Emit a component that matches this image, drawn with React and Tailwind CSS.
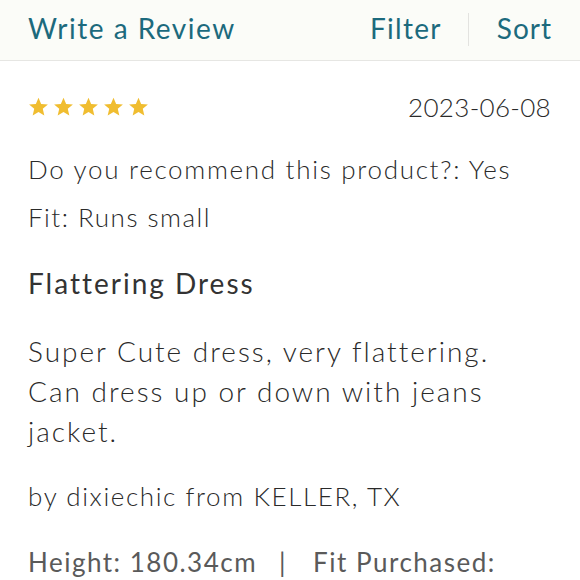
import React from "react";

const Star = () => (
  <svg width="21" height="20" viewBox="0 0 24 23" className="block">
    <path d="M12 0.8l3.05 7.2 7.75.6-5.9 5.05 1.8 7.6L12 17.2l-6.7 4.05 1.8-7.6L1.2 8.6l7.75-.6z" fill="#f0bd30" />
  </svg>
);

export default function App() {
  return (
    <div className="w-[580px] h-[580px] overflow-hidden bg-white" style={{ fontFamily: "Lato, 'Noto Sans', sans-serif" }}>
      <div className="h-[61px] bg-[#fbfcf8] border-b border-[#e6e6e3] flex items-center justify-between pl-[28px] pr-[28px] pb-[5px]">
        <div className="text-[28px] text-[#1c6a7d] tracking-[1.5px]">Write a Review</div>
        <div className="flex items-center">
          <div className="text-[28px] text-[#1c6a7d] tracking-[1.3px]">Filter</div>
          <div className="w-px h-[33px] bg-[#e3e3e0] ml-[26px] mr-[28px] mt-[3px]" />
          <div className="text-[28px] text-[#1c6a7d] tracking-[1px]">Sort</div>
        </div>
      </div>
      <div className="pl-[28px] pr-[29px] text-[#2a2a2a]">
        <div className="flex items-center justify-between mt-[26px] h-[40px]">
          <div className="flex gap-[4px]">
            <Star /><Star /><Star /><Star /><Star />
          </div>
          <div className="text-[26px] font-light tracking-[0.3px]">2023-06-08</div>
        </div>
        <div className="text-[26px] font-light tracking-[1.7px] mt-[22px] leading-[40px]">Do you recommend this product?: Yes</div>
        <div className="text-[26px] font-light tracking-[1.5px] mt-[8px] leading-[40px]">Fit: Runs small</div>
        <div className="text-[28px] tracking-[2px] mt-[26px] leading-[40px] text-[#333333]">Flattering Dress</div>
        <div className="text-[28px] font-light tracking-[2px] mt-[28px] leading-[40px]">
          Super Cute dress, very flattering.<br />Can dress up or down with jeans<br />jacket.
        </div>
        <div className="text-[26px] font-light tracking-[1.6px] mt-[25px] leading-[40px]">by dixiechic from KELLER, TX</div>
        <div className="text-[26px] tracking-[1.5px] mt-[26px] leading-[40px] text-[#5a5a5a] whitespace-nowrap">
          Height: 180.34cm<span className="ml-[22px] mr-[26px]">|</span>Fit Purchased:
        </div>
      </div>
    </div>
  );
}
